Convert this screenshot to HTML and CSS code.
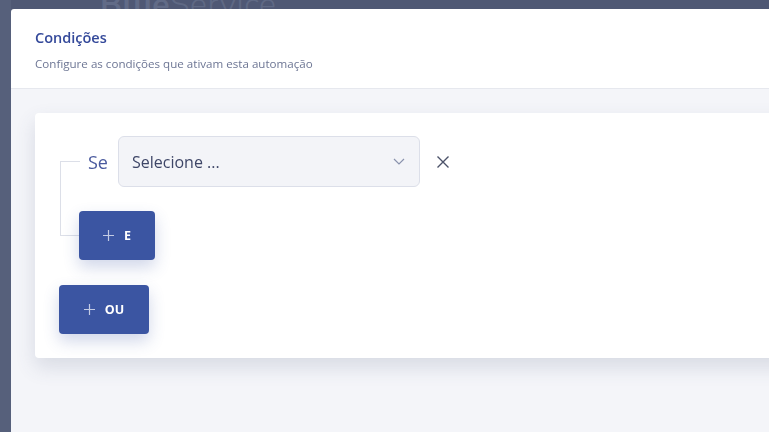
FILE: index.html
```html
<!DOCTYPE html>
<html lang="pt-BR">
<head>
<meta charset="utf-8">
<title>Condições</title>
<link rel="stylesheet" href="styles.css">
</head>
<body>
  <div class="app">
    <aside class="app-sidebar"></aside>
    <header class="app-header">
      <div class="brand"><b>Blue</b>Service</div>
    </header>
  </div>

  <div class="overlay">
    <section class="modal">
      <header class="modal-header">
        <h2 class="modal-title">Condições</h2>
        <p class="modal-subtitle">Configure as condições que ativam esta automação</p>
      </header>
      <div class="modal-body">
        <div class="card">
          <div class="tree">
            <div class="branch-top"></div>
            <div class="cond-row">
              <span class="cond-label">Se</span>
              <button class="select" type="button">
                <span>Selecione ...</span>
                <svg class="chevron" width="12" height="7" viewBox="0 0 12 7"><path d="M1 1l5 5 5-5" fill="none" stroke="#8a93ad" stroke-width="1.2"/></svg>
              </button>
              <button class="remove" type="button" aria-label="Remover">
                <svg width="14" height="14" viewBox="0 0 14 14"><path d="M1.5 1.5l11 11M12.5 1.5l-11 11" fill="none" stroke="#4b5269" stroke-width="1.4"/></svg>
              </button>
            </div>
            <div class="branch-bottom"></div>
            <div class="and-row">
              <button class="btn btn-and" type="button">
                <svg class="plus" width="11" height="11" viewBox="0 0 11 11"><path d="M5.5 0v11M0 5.5h11" stroke="#c3cbe4" stroke-width="1.2"/></svg>E
              </button>
            </div>
          </div>
          <button class="btn btn-or" type="button">
            <svg class="plus" width="11" height="11" viewBox="0 0 11 11"><path d="M5.5 0v11M0 5.5h11" stroke="#c3cbe4" stroke-width="1.2"/></svg>OU
          </button>
        </div>
      </div>
    </section>
  </div>
</body>
</html>
```

FILE: styles.css
```css
* { box-sizing: border-box; }

html, body {
  margin: 0;
  height: 100%;
  overflow: hidden;
}

body {
  background: #4f5874;
  font-family: "Open Sans", "Noto Sans", sans-serif;
}

/* application behind the dialog */
.app {
  display: flex;
  height: 100%;
}

.app-sidebar {
  width: 11px;
  background: #56607b;
}

.app-header {
  flex: 1;
  height: 40px;
  padding-left: 89px;
}

.brand {
  margin-top: -17px;
  font-family: "Nunito", "Open Sans", sans-serif;
  font-size: 32px;
  font-weight: 300;
  color: #5f6984;
  letter-spacing: 0.5px;
}

.brand b {
  font-weight: 700;
  color: #616b87;
}

/* dialog layer */
.overlay {
  position: fixed;
  top: 9px;
  left: 11px;
  right: -40px;
  bottom: -40px;
}

.modal {
  display: flex;
  flex-direction: column;
  height: 100%;
  background: #fff;
  border-radius: 3px 0 0 0;
  overflow: hidden;
}

.modal-header {
  height: 80px;
  padding: 19px 24px 0;
  border-bottom: 1px solid #e6e8ee;
}

.modal-title {
  margin: 0;
  font-size: 14.5px;
  font-weight: 600;
  color: #34499a;
  line-height: 20px;
}

.modal-subtitle {
  margin: 8px 0 0;
  font-size: 11.6px;
  color: #6d7694;
  line-height: 16px;
}

.modal-body {
  flex: 1;
  background: #f4f5f9;
  padding: 24px 0 0 24px;
}

.card {
  height: 245px;
  background: #fff;
  border-radius: 4px 0 0 4px;
  box-shadow: 0 9px 20px rgba(70, 80, 120, 0.16);
  padding: 23px 24px 24px;
}

/* condition tree */
.tree {
  display: grid;
  grid-template-columns: 20px auto;
  margin-left: 1px;
  margin-bottom: 25px;
}

.branch-top {
  margin-top: 25px;
  border-top: 1px solid #dcdfe8;
  border-left: 1px solid #dcdfe8;
}

.branch-bottom {
  height: 25px;
  border-left: 1px solid #dcdfe8;
  border-bottom: 1px solid #dcdfe8;
}

.cond-row {
  display: flex;
  align-items: center;
  height: 51px;
  margin-bottom: 24px;
  margin-left: -1px;
}

.cond-label {
  margin-left: 9px;
  width: 30px;
  font-size: 18px;
  color: #4a5a9e;
}

.select {
  display: flex;
  align-items: center;
  justify-content: space-between;
  width: 302px;
  height: 51px;
  padding: 0 14px 0 13px;
  background: #f3f4f8;
  border: 1px solid #dcdfe9;
  border-radius: 6px;
  font-family: inherit;
  font-size: 16px;
  color: #3e4667;
  text-align: left;
}

.remove {
  display: flex;
  margin-left: 16px;
  padding: 0;
  border: 0;
  background: none;
}

.and-row {
  display: flex;
  margin-left: -1px;
}

.btn {
  display: flex;
  align-items: center;
  justify-content: center;
  height: 49px;
  padding: 0;
  border: 0;
  border-radius: 4px;
  background: #3b55a2;
  color: #fff;
  font-family: inherit;
  font-size: 12.5px;
  font-weight: 700;
  box-shadow: 0 7px 16px rgba(59, 85, 162, 0.24);
}

.plus {
  margin-right: 10px;
}

.btn-and {
  width: 76px;
}

.btn-or {
  width: 90px;
}
```
